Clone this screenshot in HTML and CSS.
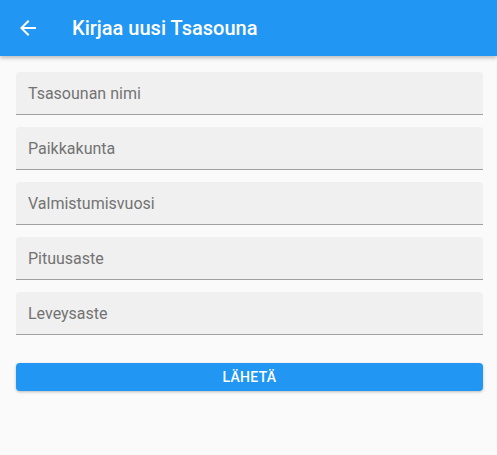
FILE: index.html
```html
<!DOCTYPE html>
<html lang="fi">
<head>
<meta charset="utf-8">
<link rel="stylesheet" href="styles.css">
</head>
<body>
<header class="appbar">
  <svg class="back" width="24" height="24" viewBox="0 0 24 24"><path fill="#fff" d="M20 11H7.83l5.59-5.59L12 4l-8 8 8 8 1.41-1.41L7.83 13H20v-2z"/></svg>
  <h1 class="title">Kirjaa uusi Tsasouna</h1>
</header>
<main class="form">
  <div class="field"><span class="label">Tsasounan nimi</span></div>
  <div class="field"><span class="label">Paikkakunta</span></div>
  <div class="field"><span class="label">Valmistumisvuosi</span></div>
  <div class="field"><span class="label">Pituusaste</span></div>
  <div class="field"><span class="label">Leveysaste</span></div>
  <button class="submit">LÄHETÄ</button>
</main>
</body>
</html>
```
FILE: styles.css
```css
html, body {
  margin: 0;
  padding: 0;
  background: #fafafa;
  font-family: Roboto, "Liberation Sans", sans-serif;
  height: 100%;
}
.appbar {
  height: 56px;
  background: #2196f3;
  display: flex;
  align-items: center;
  padding-left: 16px;
  box-shadow: 0 2px 4px rgba(0,0,0,0.25);
  position: relative;
  z-index: 1;
}
.back {
  display: block;
  flex: none;
}
.title {
  margin: 0 0 0 32px;
  color: #fff;
  font-size: 20px;
  font-weight: 500;
}
.form {
  padding: 16px 14px 0 16px;
  display: flex;
  flex-direction: column;
  gap: 12px;
}
.field {
  height: 42px;
  background: #f0f0f0;
  border-radius: 4px 4px 0 0;
  border-bottom: 1px solid #a0a0a0;
  display: flex;
  align-items: center;
  padding: 0 12px;
}
.label {
  font-size: 16px;
  color: #737373;
}
.submit {
  margin-top: 16px;
  height: 28px;
  border: none;
  border-radius: 4px;
  background: #2196f3;
  color: #fff;
  font-family: Roboto, "Liberation Sans", sans-serif;
  font-size: 14px;
  font-weight: 500;
  letter-spacing: 0.3px;
  box-shadow: 0 1px 3px rgba(0,0,0,0.25);
  padding: 0;
}
```
